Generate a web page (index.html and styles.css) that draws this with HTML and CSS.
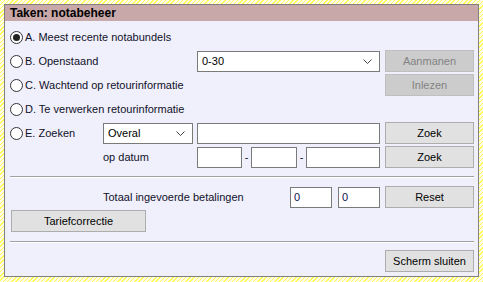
FILE: index.html
```html
<!DOCTYPE html>
<html lang="nl">
<head>
  <meta charset="UTF-8">
  <title>Taken: notabeheer</title>
  <link rel="stylesheet" href="styles.css">
</head>
<body>

<div class="panel">
  <div class="panel-title">Taken: notabeheer</div>
  <div class="panel-body">
    <div class="grid">
      <label class="radio span3"><span class="dot checked"></span>A. Meest recente notabundels</label>

      <label class="radio span2"><span class="dot"></span>B. Openstaand</label>
      <div class="select"><span>0-30</span>
        <svg width="9" height="5" viewBox="0 0 9 5"><path d="M0.5 0.5 L4.5 4.5 L8.5 0.5" fill="none" stroke="#444" stroke-width="1"/></svg>
      </div>
      <button class="btn" disabled>Aanmanen</button>

      <label class="radio span3"><span class="dot"></span>C. Wachtend op retourinformatie</label>
      <button class="btn" disabled>Inlezen</button>

      <label class="radio span4"><span class="dot"></span>D. Te verwerken retourinformatie</label>

      <label class="radio"><span class="dot"></span>E. Zoeken</label>
      <div class="select narrow"><span>Overal</span>
        <svg width="9" height="5" viewBox="0 0 9 5"><path d="M0.5 0.5 L4.5 4.5 L8.5 0.5" fill="none" stroke="#444" stroke-width="1"/></svg>
      </div>
      <input class="field" type="text">
      <button class="btn">Zoek</button>

      <span class="text col2">op datum</span>
      <div class="date">
        <input class="field day" type="text">
        <span class="dash">-</span>
        <input class="field month" type="text">
        <span class="dash">-</span>
        <input class="field year" type="text">
      </div>
      <button class="btn">Zoek</button>
    </div>

    <div class="sep"></div>

    <div class="grid">
      <span class="text col2">Totaal ingevoerde betalingen</span>
      <div class="totals">
        <input class="field small" type="text" value="0">
        <input class="field small" type="text" value="0">
      </div>
      <button class="btn">Reset</button>

      <button class="btn tarief">Tariefcorrectie</button>
    </div>

    <div class="sep bottom"></div>

    <div class="footer">
      <button class="btn">Scherm sluiten</button>
    </div>
  </div>
</div>

</body>
</html>
```

FILE: styles.css
```css
* {
  box-sizing: border-box;
}

body {
  margin: 0;
  padding: 4px;
  height: 100vh;
  font-family: 'Liberation Sans', Arial, sans-serif;
  font-size: 11px;
  color: #10102a;
  background: repeating-linear-gradient(-45deg, #ffff5a 0 1px, #fcfce6 1px 3px);
}

.panel {
  width: 475px;
  height: 273px;
  border: 1px solid #808080;
  background-color: #f0f0fc;
}

.panel-title {
  height: 16px;
  line-height: 16px;
  padding-left: 5px;
  background-color: #c8a8a8;
  font-size: 12px;
  font-weight: bold;
  color: #000;
}

.panel-body {
  padding: 5px 4px 0 5px;
}

.grid {
  display: grid;
  grid-template-columns: 93px 94px 188px 89px;
  grid-auto-rows: 22px;
  row-gap: 2px;
  align-items: center;
}

.span2 { grid-column: span 2; }
.span3 { grid-column: span 3; }
.span4 { grid-column: span 4; }
.col2 { grid-column: 2; }

.radio {
  display: flex;
  align-items: center;
  white-space: nowrap;
}

.dot {
  width: 13px;
  height: 13px;
  margin-right: 2px;
  border: 1px solid #333;
  border-radius: 50%;
  background-color: #fff;
  display: flex;
  align-items: center;
  justify-content: center;
}

.dot.checked::after {
  content: "";
  width: 7px;
  height: 7px;
  border-radius: 50%;
  background-color: #222;
}

.text {
  white-space: nowrap;
}

.select {
  width: 183px;
  height: 21px;
  border: 1px solid #7a7a7a;
  background-color: #fff;
  padding: 0 7px 0 4px;
  display: flex;
  align-items: center;
  justify-content: space-between;
  color: #000;
}

.select.narrow {
  width: 90px;
}

.field {
  width: 183px;
  height: 21px;
  border: 1px solid #7a7a7a;
  background-color: #fff;
  font: inherit;
  color: #101050;
  padding: 0 3px;
  outline: none;
}

.date {
  display: flex;
  align-items: center;
}

.date .day { width: 45px; }
.date .month { width: 46px; }
.date .year { width: 74px; }

.dash {
  width: 9px;
  text-align: center;
}

.totals {
  display: flex;
  justify-content: flex-end;
  gap: 6px;
  width: 183px;
}

.field.small {
  width: 42px;
}

.btn {
  width: 89px;
  height: 22px;
  border: 1px solid #adadad;
  background-color: #e1e1e1;
  font: inherit;
  color: #000;
  padding: 0;
}

.btn:disabled {
  background-color: #cccccc;
  border-color: #bfbfbf;
  color: #838383;
}

.btn.tarief {
  grid-column: 1 / span 2;
  width: 135px;
  margin-left: 1px;
}

.sep {
  height: 2px;
  margin: 8px 0;
  border-top: 1px solid #a0a0a0;
  border-bottom: 1px solid #fff;
}

.sep.bottom {
  margin: 9px 0 7px;
}

.footer {
  display: flex;
  justify-content: flex-end;
}
```
